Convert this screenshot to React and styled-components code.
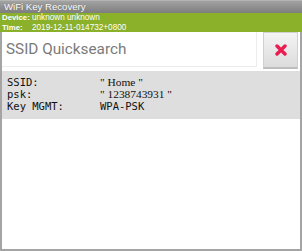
import React from "react";
import styled, { createGlobalStyle } from "styled-components";

const Global = createGlobalStyle`
  html, body { margin: 0; padding: 0; background: #fff; }
  body { font-family: "Liberation Sans", Arial, sans-serif; }
  * { box-sizing: border-box; }
`;

const Frame = styled.div`
  width: 302px;
  height: 251px;
  display: flex;
  flex-direction: column;
  background: #fff;
  overflow: hidden;
`;

const TitleBar = styled.div`
  height: 13px;
  background: linear-gradient(#a2a2a2, #7e7e7e);
  border-top: 1px solid #b4b4b4;
  color: #fff;
  font-size: 9.6px;
  line-height: 12px;
  padding-left: 4px;
  text-shadow: 0 0 1px rgba(0,0,0,0.3);
`;

const InfoBand = styled.div`
  height: 19px;
  background: #8bb02a;
  display: grid;
  grid-template-columns: 30px 1fr;
  align-content: center;
  padding-left: 2px;
  color: #fff;
  font-size: 8.2px;
  line-height: 9.5px;
`;

const InfoLabel = styled.span`
  font-weight: bold;
  font-size: 7.8px;
  white-space: nowrap;
`;

const Body = styled.div`
  flex: 1;
  display: flex;
  flex-direction: column;
  border: 2px solid #a4a4a4;
  border-top: none;
`;

const SearchRow = styled.div`
  display: flex;
  align-items: flex-start;
  gap: 6px;
  height: 39px;
  padding-right: 2px;
`;

const SearchInput = styled.div`
  flex: 1;
  height: 35px;
  background: #fff;
  border-right: 1px solid #ececec;
  border-bottom: 1px solid #ececec;
  color: #7a7a7a;
  font-size: 15.3px;
  line-height: 35px;
  padding-left: 4px;
  font-family: Roboto, "Liberation Sans", sans-serif;
`;

const ClearButton = styled.div`
  width: 35px;
  height: 37px;
  background: linear-gradient(#f4f4f4, #dcdcdc);
  border: 1px solid #d0d0d0;
  border-bottom: 2px solid #bdbdbd;
  display: flex;
  align-items: center;
  justify-content: center;
`;

const Panel = styled.div`
  background: #dedede;
  height: 48px;
  padding: 6px 0 0 5px;
  display: grid;
  grid-template-columns: 93px 1fr;
  grid-auto-rows: 11.8px;
  font-family: "DejaVu Sans Mono", monospace;
  font-size: 10.5px;
  line-height: 11.8px;
  color: #111;
`;

const Value = styled.span`
  display: block;
  line-height: 11.8px;
  font-family: ${(p) => (p.serif ? '"Liberation Serif", "Times New Roman", serif' : '"DejaVu Sans Mono", monospace')};
  font-size: ${(p) => (p.serif ? "11.4px" : "10.5px")};
  white-space: pre;
`;

export default function App() {
  return (
    <>
      <Global />
      <Frame>
        <TitleBar>WiFi Key Recovery</TitleBar>
        <InfoBand>
          <InfoLabel>Device:</InfoLabel>
          <span>unknown unknown</span>
          <InfoLabel>Time:</InfoLabel>
          <span>2019-12-11-014732+0800</span>
        </InfoBand>
        <Body>
          <SearchRow>
            <SearchInput>SSID Quicksearch</SearchInput>
            <ClearButton>
              <svg width="12" height="12" viewBox="0 0 12 12">
                <path d="M2 2 L10 10 M10 2 L2 10" stroke="#ea1c50" strokeWidth="3.4" strokeLinecap="round" />
              </svg>
            </ClearButton>
          </SearchRow>
          <Panel>
            <span>SSID:</span>
            <Value serif>{'" Home "'}</Value>
            <span>psk:</span>
            <Value serif>{'" 1238743931 "'}</Value>
            <span>Key MGMT:</span>
            <Value>WPA-PSK</Value>
          </Panel>
        </Body>
      </Frame>
    </>
  );
}
